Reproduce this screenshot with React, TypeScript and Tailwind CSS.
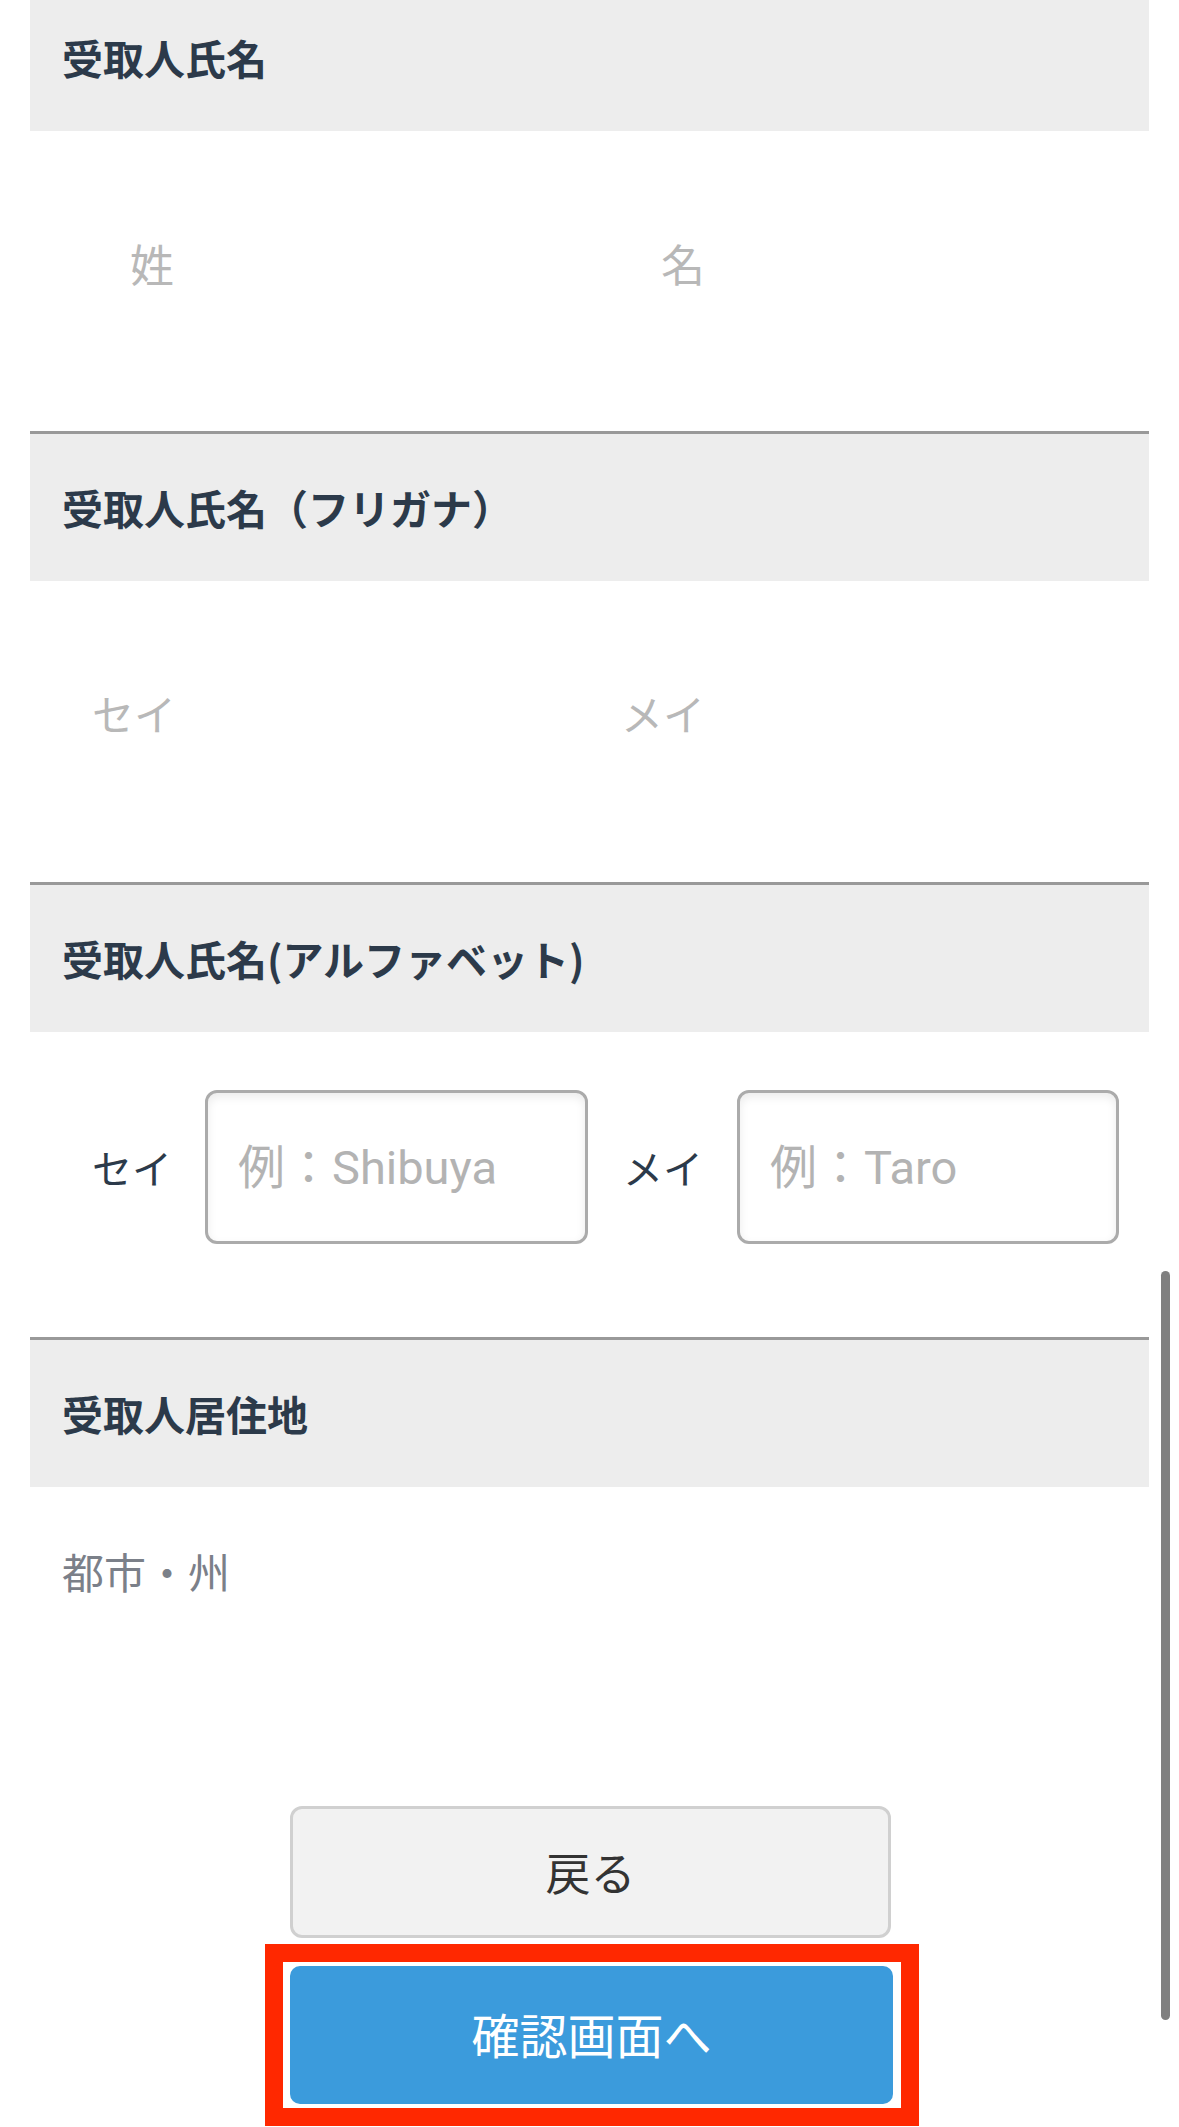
import React from "react";

const JP = { fontFamily: '"Noto Sans CJK JP", sans-serif' };
const INPUT_FONT = { fontFamily: 'Roboto, "Noto Sans CJK JP", sans-serif' };

function Header({ children, first = false }: { children: React.ReactNode; first?: boolean }) {
  return (
    <div
      className={
        first
          ? "h-[131px] bg-[#ededed] flex items-center pl-[32px] pb-[16px]"
          : "h-[150px] bg-[#ededed] border-t-[3px] border-[#999999] flex items-center pl-[32px]"
      }
    >
      <span className="text-[41px] leading-none font-bold text-[#2c3a4a]" style={JP}>
        {children}
      </span>
    </div>
  );
}

export default function App() {
  return (
    <div className="relative w-[1179px] h-[2127px] overflow-hidden bg-white" style={JP}>
      <div className="ml-[30px] w-[1119px]">
        {/* Section 1 */}
        <Header first>受取人氏名</Header>
        <div className="h-[300px] pt-[110px]">
          <div className="grid grid-cols-2 w-[1070px]">
            <div className="pl-[100px] text-[44px] leading-[44px] text-[#b8b8b8]">姓</div>
            <div className="pl-[96px] text-[44px] leading-[44px] text-[#b8b8b8]">名</div>
          </div>
        </div>

        {/* Section 2 */}
        <Header>受取人氏名（フリガナ）</Header>
        <div className="h-[301px] pt-[111px]">
          <div className="grid grid-cols-2 w-[1070px]">
            <div className="pl-[62px] text-[42px] leading-[42px] text-[#b8b8b8]">セイ</div>
            <div className="pl-[56px] text-[42px] leading-[42px] text-[#b8b8b8]">メイ</div>
          </div>
        </div>

        {/* Section 3 */}
        <Header>受取人氏名(アルファベット)</Header>
        <div className="h-[305px] pt-[58px]">
          <div className="flex items-center pl-[62px]">
            <span className="w-[113px] text-[40px] leading-none text-[#2c3a4a]">セイ</span>
            <input
              className="w-[383px] h-[154px] border-[3px] border-[#ababab] rounded-[12px] bg-white shadow-[inset_0_4px_10px_rgba(0,0,0,0.08)] pl-[30px] text-[47px] text-[#333] placeholder:text-[#b3b3b3] outline-none"
              style={INPUT_FONT}
              placeholder="例：Shibuya"
            />
            <span className="w-[149px] pl-[35px] text-[40px] leading-none text-[#2c3a4a]">メイ</span>
            <input
              className="w-[382px] h-[154px] border-[3px] border-[#ababab] rounded-[12px] bg-white shadow-[inset_0_4px_10px_rgba(0,0,0,0.08)] pl-[30px] text-[47px] text-[#333] placeholder:text-[#b3b3b3] outline-none"
              style={INPUT_FONT}
              placeholder="例：Taro"
            />
          </div>
        </div>

        {/* Section 4 */}
        <Header>受取人居住地</Header>
        <div className="pt-[63px]">
          <div className="pl-[32px] text-[42px] leading-[42px] text-[#7b8089]">都市・州</div>
        </div>

        {/* Buttons */}
        <div className="mt-[214px] pl-[260px]">
          <button className="w-[601px] h-[132px] border-[3px] border-[#d0d0d0] bg-[#f2f2f2] rounded-[12px] text-[45px] text-[#333333] flex items-center justify-center">
            戻る
          </button>
        </div>
        <div className="mt-[6px] pl-[235px]">
          <div className="w-[654px] h-[182px] border-[18px] border-[#ff2800] bg-white pt-[4px] pl-[7px]">
            <button className="w-[603px] h-[138px] bg-[#3b9bdc] rounded-[10px] text-[48px] text-white flex items-center justify-center pb-[4px]">
              確認画面へ
            </button>
          </div>
        </div>
      </div>

      {/* iOS scroll indicator */}
      <div className="absolute left-[1161px] top-[1271px] w-[9px] h-[749px] rounded-full bg-[#808080]" />
    </div>
  );
}
